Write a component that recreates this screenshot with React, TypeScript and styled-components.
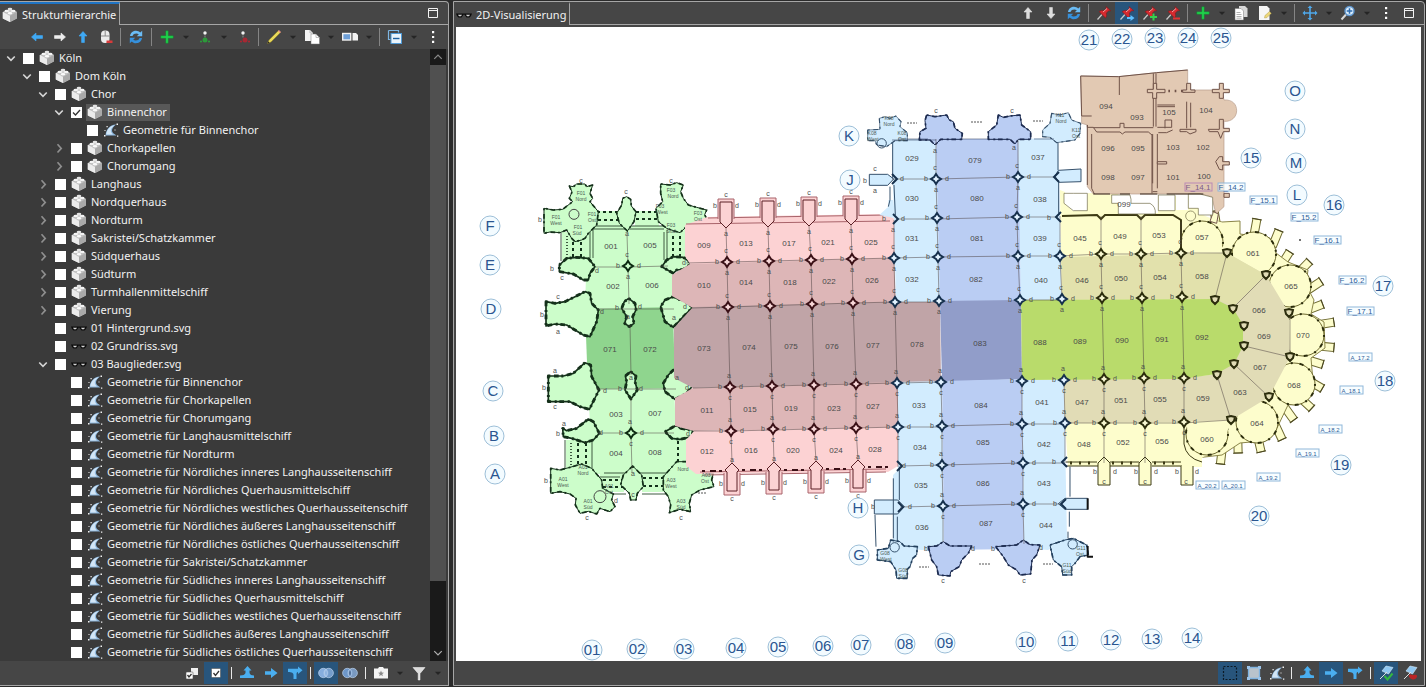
import React from "react";
import styled, { createGlobalStyle } from "styled-components";

const GlobalStyle = createGlobalStyle`
  * { box-sizing: border-box; }
  body { margin: 0; background: #1c1c1c; }
  button { font: inherit; color: inherit; border: 0; background: none; padding: 0; }
`;

/* ---------- layout ---------- */

const Shell = styled.main`
  display: flex;
  gap: 4px;
  height: 100vh;
  min-height: 300px;
  padding: 1px 1px 1px 0;
  background: #2b2b2b;
  color: #f2f2f2;
  font-family: "Noto Sans", "Open Sans", sans-serif;
  font-size: 11px;
  line-height: 18px;
`;

const Panel = styled.section<{ $grow?: boolean }>`
  display: flex;
  flex-direction: column;
  flex: ${(p) => (p.$grow ? "1 1 0" : "0 0 449px")};
  min-width: 0;
  background: #464646;
  border: 1px solid #a6a6a6;
  border-left-width: ${(p) => (p.$grow ? "1px" : "0")};
  border-radius: 0 4px 0 0;
`;

const Header = styled.header`
  display: flex;
  flex: 0 0 23px;
  border-bottom: 1px solid #a6a6a6;
`;

const Tab = styled.button<{ $active?: boolean }>`
  display: flex;
  align-items: center;
  gap: 4px;
  padding: 0 3px 0 2px;
  margin-bottom: -1px;
  background: #464646;
  border-right: 1px solid #a6a6a6;
  border-top: 2px solid ${(p) => (p.$active ? "#1f74c4" : "#464646")};
  white-space: nowrap;
`;

const HeaderTools = styled.div`
  display: flex;
  align-items: center;
  margin-left: auto;
  padding-right: 3px;
`;

const ToolRow = styled.div`
  display: flex;
  flex: 0 0 24px;
  align-items: center;
  justify-content: flex-end;
  padding-right: 3px;
`;

const Tool = styled.button<{ $width?: number; $on?: boolean }>`
  display: flex;
  align-items: center;
  justify-content: center;
  flex: 0 0 ${(p) => p.$width ?? 24}px;
  height: 22px;
  background: ${(p) => (p.$on ? "#28557c" : "transparent")};
`;

const Sep = styled.span<{ $tall?: boolean }>`
  flex: 0 0 1px;
  height: ${(p) => (p.$tall ? 18 : 12)}px;
  margin: 0 3px;
  background: ${(p) => (p.$tall ? "#858585" : "#e8e8e8")};
`;

const TreeArea = styled.div`
  display: flex;
  flex: 1 1 0;
  min-height: 0;
  padding-right: 2px;
  background: #3a3a3a;
`;

const Tree = styled.ul`
  flex: 1;
  min-width: 0;
  margin: 0;
  padding: 0;
  list-style: none;
  overflow: hidden;
`;

const Row = styled.li<{ $depth: number }>`
  display: flex;
  align-items: center;
  height: 18px;
  padding-left: ${(p) => 5 + p.$depth * 16}px;
`;

const Twisty = styled.button`
  display: flex;
  align-items: center;
  flex: 0 0 18px;
  height: 18px;
`;

const Check = styled.input`
  appearance: none;
  width: 11px;
  height: 11px;
  margin: 0;
  background: #fff;
`;

const CheckWrap = styled.span`
  display: grid;
  flex: 0 0 11px;
  margin-right: 4px;
  > * { grid-area: 1 / 1; }
  svg { pointer-events: none; }
`;

const RowLabel = styled.label<{ $selected?: boolean }>`
  display: flex;
  align-items: center;
  gap: 4px;
  height: 17px;
  padding: 0 3px 0 1px;
  background: ${(p) => (p.$selected ? "#585858" : "transparent")};
  white-space: nowrap;
`;

const Scrollbar = styled.div`
  display: flex;
  flex-direction: column;
  flex: 0 0 16px;
  background: #1a1a1a;
`;

const ScrollButton = styled.button`
  display: flex;
  align-items: center;
  justify-content: center;
  flex: 0 0 16px;
`;

const Track = styled.div`
  flex: 1;
  min-height: 0;
`;

const Thumb = styled.div`
  height: 89%;
  background: #505050;
`;

const Canvas = styled.div`
  flex: 1 1 0;
  min-height: 0;
  margin: 2px 3px 0 2px;
  background: #fff;
  svg { display: block; width: 100%; height: 100%; }
`;

/* ---------- icons ---------- */

const Svg = ({ children, size = 16 }: { children: React.ReactNode; size?: number }) => (
  <svg width={size} height={size} viewBox="0 0 16 16" fill="none" aria-hidden="true">
    {children}
  </svg>
);

const ARROW = "M2.5 8 7 4v2.6h6.5v2.8H7V12z";
const Arrow = ({ turn = 0, color = "#3fa9f5" }: { turn?: number; color?: string }) => (
  <Svg>
    <path d={ARROW} fill={color} stroke={color} strokeWidth=".6" transform={`rotate(${turn} 8 8)`} />
  </Svg>
);

const Brick = () => (
  <Svg>
    <path d="M.8 5 7.500 2l7.300 2.800v6.700L8 15 .8 11.500z" fill="#cfcfcf" />
    <path d="M.8 5 8 8.500V15L.8 11.500z" fill="#ececec" />
    <path d="M14.800 4.800 8 8.500V15l6.800-3.500z" fill="#a9a9a9" />
    <path d="M2.500 4v1.800c1 1 3.500 1 4.500 0V4zM9 4v1.800c1 1 3.500 1 4.500 0V4zM5.700 6.200v1.600c1 1 3.600 1 4.600 0V6.200z" fill="#b9b9b9" />
    <ellipse cx="4.800" cy="4" rx="2.300" ry="1.300" fill="#f4f4f4" />
    <ellipse cx="11.200" cy="4" rx="2.300" ry="1.300" fill="#f4f4f4" />
    <ellipse cx="8" cy="2" rx="2.300" ry="1.200" fill="#e4e4e4" />
    <ellipse cx="8" cy="6.200" rx="2.300" ry="1.300" fill="#fafafa" />
  </Svg>
);

const Shape = () => (
  <Svg>
    <path d="M2.500 13.500C3 7.500 6.500 3 13 2.500 10.500 4.500 9 6.500 9 8.500c0 2 2 3.500 4.500 5z" fill="#8fb9df" />
    <path d="M3.200 12.500C4 7.500 7 4 11.500 3.200 9 5 7.800 7 7.800 8.500c0 1.500.7 2.500 2 4z" fill="#d3e6f6" />
    <path d="M1 13h1.500v1.500H1zM13.500 1.500H15V3h-1.500zM14 13.500h1.300v1.300H14zM3.500 4h1.200v1.200H3.500zM1.500 8h1v1h-1zM11.500 7.500h1v1h-1z" fill="#f4f4f4" />
  </Svg>
);

const Glasses = () => (
  <Svg>
    <path d="M0 6.500h7v2L5.500 10.500h-3L1 9zM9 6.500h7L15 9l-1.500 1.500h-3L9 8.500zM6 6.500h4v1.200H6z" fill="#0b0b0b" />
    <path d="M2 7.700h4L5 9.300H3zM10 7.700h4l-1 1.600h-2z" fill="#d5d5d5" />
  </Svg>
);

const Refresh = () => (
  <Svg>
    <path d="M2 7C2.500 3.500 5.300 1.800 8 1.800c1.700 0 3.200.7 4.200 1.800L14.200 1.800V7.200H8.800L10.800 5.300C9 3.900 5.300 4.200 4.500 7z" fill="#6bbcf5" />
    <path d="M14 9c-.5 3.500-3.300 5.200-6 5.200-1.700 0-3.200-.7-4.200-1.800L1.800 14.200V8.800H7.200L5.200 10.700C7 12.100 10.700 11.800 11.500 9z" fill="#3590dc" />
  </Svg>
);

const Plus = () => (
  <Svg>
    <path d="M6.800 1.800h2.400v5h5v2.400h-5v5H6.800v-5h-5V6.800h5z" fill="#1fd14b" stroke="#0b8a2a" strokeWidth=".4" />
  </Svg>
);

const Mouse = () => (
  <Svg>
    <rect x="3" y="1.500" width="8.500" height="12.500" rx="4" fill="#ececec" />
    <path d="M7.200 1.500V7M3 7h8.500" stroke="#8b8b8b" />
    <rect x="8.500" y="11.500" width="6" height="2.500" fill="#d83a3a" />
  </Svg>
);

const Node = ({ remove }: { remove?: boolean }) => {
  const color = remove ? "#a82833" : "#2c9a3a";
  const cx = remove ? 10 : 8;
  return (
    <Svg>
      <circle cx="8" cy="4" r="1.700" fill="#f2f2f2" />
      <path d="M8 6.500v2" stroke="#8a8a8a" />
      <circle cx={cx} cy="11" r="2.500" fill={color} />
      <circle cx={cx - 4} cy="12.500" r="1.100" fill={color} />
      <circle cx={cx + 4} cy="12.500" r="1.100" fill={color} />
    </Svg>
  );
};

const Pencil = () => (
  <Svg>
    <path d="M1.500 14.500 3 11 12.500 1.500l2 2L5 13z" fill="#e9d95a" stroke="#8e7d1c" strokeWidth=".5" />
    <path d="m12 2 1-1 2 2-1 1z" fill="#e98a8a" />
    <path d="m1.500 14.500.8-2 1.200 1.200z" fill="#222" />
  </Svg>
);

const Copy = () => (
  <Svg>
    <path d="M1 1h5l3 3v8H1z" fill="#f4f4f4" />
    <path d="M7 5h5l3.500 3.500V15H7z" fill="#fff" stroke="#777" strokeWidth=".5" />
    <path d="M12 5v3.500h3.500M6 1v3h3" stroke="#999" strokeWidth=".6" />
  </Svg>
);

const Pages = () => (
  <Svg>
    <path d="M6 1h6l2.500 2.500V12H6z" fill="#d8d8d8" />
    <path d="M2 3.500h6L10.500 6v9H2z" fill="#fff" stroke="#777" strokeWidth=".5" />
    <path d="M3.500 7.500h4M3.500 9.500h5M3.500 11.500h5M3.500 13.200h5" stroke="#8f8f8f" strokeWidth=".7" />
  </Svg>
);

const Doc = () => (
  <Svg>
    <path d="M2 1h8l2.500 2.500V15H2z" fill="#f6f6f6" />
    <path d="m7.500 13 .5-2.500 4.500-4 1.800 1.800-4.300 4.300z" fill="#ecd77a" stroke="#a68f31" strokeWidth=".4" />
  </Svg>
);

const Swap = () => (
  <Svg>
    <rect x=".7" y="4.500" width="8" height="6.500" fill="#6fa0d8" stroke="#f2f2f2" strokeWidth="1.400" />
    <path d="M10.500 4H14l2 2v5.500h-5.500z" fill="#f4f4f4" />
  </Svg>
);

const Collapse = () => (
  <Svg>
    <path d="M1.500 1.500h10v2M1.500 1.500v9h2" stroke="#7db5e2" strokeWidth="1.200" />
    <rect x="4" y="4.500" width="10.500" height="10" fill="#e9f3fb" stroke="#4f9ad6" />
    <path d="M6 9.500h6.500" stroke="#1c5f9e" strokeWidth="1.400" />
  </Svg>
);

const Dots = () => (
  <Svg>
    <path d="M7 2h2.200v2.200H7zM7 6.900h2.200v2.200H7zM7 11.800h2.200V14H7z" fill="#fff" />
  </Svg>
);

const Maximize = () => (
  <Svg>
    <path d="M3.500 3.500h9v9h-9zM3.500 5.500h9" stroke="#f2f2f2" />
  </Svg>
);

const Caret = () => (
  <Svg size={10}>
    <path d="M3 6h10L8 11z" fill="#252525" />
  </Svg>
);

const Pin = ({ badge }: { badge?: "go" | "add" | "remove" }) => (
  <Svg>
    <path d="M1.500 14.500 6 9.500" stroke="#c9c9c9" strokeWidth="1.200" />
    <path d="m3 6.500 2.500-1 2.500.3L10.300 3.500 10 1.500l4.800 4.300-2-.1L10.300 8l.3 2.800-1 2.200z" fill="#d62a2f" stroke="#851316" strokeWidth=".5" />
    <path d="m7 7 4-3.500" stroke="#f7a0a0" />
    {badge === "go" && <path d="M8 12h3.500v-2l4 3-4 3v-2H8z" fill="#5ec0ff" />}
    {badge === "add" && <path d="M10.500 8.500h2v2.500H15v2h-2.500v2.500h-2V13H8v-2h2.500z" fill="#35d04e" />}
    {badge === "remove" && <path d="M8 12.500h7v2H8z" fill="#e13535" />}
  </Svg>
);

const Move = () => (
  <Svg>
    <path d="M8 .5 10.500 3H8.800v4.200H13V5.500L15.500 8 13 10.500V8.800H8.800V13h1.700L8 15.500 5.500 13h1.700V8.800H3v1.700L.5 8 3 5.500v1.700h4.200V3H5.500z" fill="#4fa8ea" />
  </Svg>
);

const Zoom = () => (
  <Svg>
    <path d="m1.500 14.500 4.500-5" stroke="#d8d8d8" strokeWidth="2" />
    <circle cx="9.500" cy="6" r="4.500" fill="#d9ecfb" stroke="#5d94cc" strokeWidth="1.400" />
    <path d="M9.500 3.200v5.600M6.700 6h5.600" stroke="#2f6cb0" strokeWidth="1.500" />
  </Svg>
);

const CheckBoxes = ({ pair }: { pair?: boolean }) => (
  <Svg>
    {pair && <rect x="7" y="3" width="7" height="7" fill="#efefef" />}
    <rect x={pair ? 2 : 3.500} y={pair ? 7 : 3.500} width={pair ? 7 : 9} height={pair ? 7 : 9} rx=".8" fill="#fff" stroke="#555" strokeWidth=".6" />
    <path d={pair ? "m3.500 10 1.500 2L7.500 9" : "m5.500 8 2 2.500L11 6"} stroke="#333" strokeWidth="1.300" />
  </Svg>
);

const Flow = ({ kind }: { kind: "up" | "right" | "down" }) => (
  <Svg>
    {kind === "up" && <path d="M1 13v-2.500c3 0 5-.8 5.500-2.500V5.500h-2L8.500 1l4 4.500h-2V8c.5 1.700 2 2.500 4.500 2.500V13z" fill="#4aaeef" />}
    {kind === "right" && <path d="M2 6.300h6V3l6.500 5L8 13V9.700H2z" fill="#4aaeef" />}
    {kind === "down" && <path d="M1 3.800h10V1.500l4.500 3.700L11 9V7C9.800 7.200 9.500 8 9.500 9.500V14h-3V10C6.500 8 5 7 1 7z" fill="#4aaeef" />}
  </Svg>
);

const Venn = ({ union }: { union?: boolean }) => (
  <Svg>
    <circle cx="5.300" cy="8" r="4.700" fill={union ? "#86aede" : "#6e97c9"} stroke="#bcd3ee" strokeWidth=".7" />
    <circle cx="10.700" cy="8" r="4.700" fill="#86aede" fillOpacity=".8" stroke="#bcd3ee" strokeWidth=".7" />
    <path d="M8 4.200c1.800 2 1.800 5.600 0 7.600-1.800-2-1.800-5.600 0-7.600z" fill={union ? "#86aede" : "#3e5f8c"} stroke="#bcd3ee" strokeWidth=".7" />
  </Svg>
);

const Camera = () => (
  <Svg>
    <path d="M1 3.500h4L6 2h4l1 1.500h4v10H1z" fill="#f4f4f4" />
    <path d="m8 5.500.8 2 2.200.2-1.700 1.400.5 2.100L8 10l-1.800 1.200.5-2.100L5 7.700l2.200-.2z" fill="#8a8a8a" />
  </Svg>
);

const Funnel = () => (
  <Svg>
    <path d="M2 2.500h12L9 8.500V15H7.200V8.500z" fill="#dcdcdc" stroke="#fff" strokeWidth=".5" />
  </Svg>
);

const Marquee = () => (
  <Svg>
    <path d="M1.500 1.500h13v13h-13z" stroke="#0c1a26" strokeDasharray="2 1.500" strokeWidth="1.200" />
  </Svg>
);

const Frame = () => (
  <Svg>
    <path d="M2.500 2.500h11v11h-11z" fill="#b9c3cc" stroke="#7fb3e0" strokeWidth="1.300" />
    <path d="M1 1h3v3H1zM12 1h3v3h-3zM1 12h3v3H1zM12 12h3v3h-3z" fill="#9cc4ea" />
  </Svg>
);

const Layer = ({ off }: { off?: boolean }) => (
  <Svg>
    <path d="m8 1 7 1.500-4.500 6.500L4 6z" fill="#8fc7f1" stroke="#d9ecfa" strokeWidth=".6" />
    <path d="M2 14 9 7" stroke="#ddd" />
    {off ? (
      <path d="M7 10c2-1.500 3 .5 4.500 0s3-.5 3.500.5-1 4-3.500 4-5.500-2.500-4.500-4.500z" fill="#b92525" />
    ) : (
      <path d="m6.500 11 3 3.500 5-6" stroke="#35b83f" strokeWidth="2" />
    )}
  </Svg>
);

const Chevron = ({ open }: { open: boolean }) => (
  <Svg size={12}>
    <path d={open ? "m3 6 5 5 5-5" : "m6 3 5 5.500L6 14"} stroke={open ? "#d6d6d6" : "#8f8f8f"} strokeWidth="2.200" />
  </Svg>
);

/* ---------- tool bars ---------- */

type Item = { label: string; icon: React.ReactNode; width?: number; on?: boolean } | "sep" | "menu";

const Tools = ({ items, tall }: { items: Item[]; tall?: boolean }) => (
  <>
    {items.map((it, i) =>
      it === "sep" ? (
        <Sep key={i} $tall={tall} />
      ) : it === "menu" ? (
        <Tool key={i} $width={14} aria-label="Menü">
          <Caret />
        </Tool>
      ) : (
        <Tool key={i} $width={it.width} $on={it.on} aria-label={it.label}>
          {it.icon}
        </Tool>
      ),
    )}
  </>
);

const treeTools: Item[] = [
  { label: "Zurück", icon: <Arrow />, width: 23 },
  { label: "Vor", icon: <Arrow turn={180} color="#ededed" />, width: 23 },
  { label: "Nach oben", icon: <Arrow turn={90} />, width: 23 },
  { label: "Auswahl entfernen", icon: <Mouse />, width: 23 },
  "sep",
  { label: "Aktualisieren", icon: <Refresh /> },
  "sep",
  { label: "Neu", icon: <Plus /> },
  "menu",
  { label: "Knoten hinzufügen", icon: <Node /> },
  "menu",
  { label: "Knoten entfernen", icon: <Node remove /> },
  "sep",
  { label: "Bearbeiten", icon: <Pencil /> },
  "menu",
  { label: "Kopieren", icon: <Copy /> },
  "menu",
  { label: "Umbenennen", icon: <Swap /> },
  "menu",
  "sep",
  { label: "Alle einklappen", icon: <Collapse /> },
  "menu",
  { label: "Mehr", icon: <Dots /> },
];

const treeFooter: Item[] = [
  { label: "Mehrfachauswahl", icon: <CheckBoxes pair /> },
  { label: "Auswahl", icon: <CheckBoxes />, on: true },
  "sep",
  { label: "Übergeordnete", icon: <Flow kind="up" /> },
  { label: "Gleiche Ebene", icon: <Flow kind="right" /> },
  { label: "Untergeordnete", icon: <Flow kind="down" />, on: true },
  "sep",
  { label: "Vereinigung", icon: <Venn union />, on: true },
  { label: "Schnittmenge", icon: <Venn /> },
  "sep",
  { label: "Ansicht", icon: <Camera /> },
  "menu",
  { label: "Filter", icon: <Funnel /> },
  "menu",
];

const viewTools: Item[] = [
  { label: "Hoch", icon: <Arrow turn={90} color="#dedede" />, width: 23 },
  { label: "Runter", icon: <Arrow turn={270} color="#dedede" />, width: 23 },
  { label: "Aktualisieren", icon: <Refresh />, width: 23 },
  "sep",
  { label: "Anheften", icon: <Pin />, width: 23 },
  { label: "Folgen", icon: <Pin badge="go" />, width: 23, on: true },
  { label: "Pin hinzufügen", icon: <Pin badge="add" />, width: 23 },
  { label: "Pin entfernen", icon: <Pin badge="remove" />, width: 23 },
  "sep",
  { label: "Neu", icon: <Plus /> },
  "menu",
  { label: "Kopieren", icon: <Pages /> },
  { label: "Notiz", icon: <Doc /> },
  "menu",
  "sep",
  { label: "Verschieben", icon: <Move /> },
  "menu",
  { label: "Zoom", icon: <Zoom /> },
  "menu",
  { label: "Mehr", icon: <Dots />, width: 23 },
  { label: "Maximieren", icon: <Maximize /> },
];

const viewFooter: Item[] = [
  { label: "Rechteckauswahl", icon: <Marquee />, on: true },
  { label: "Rahmen", icon: <Frame />, width: 23 },
  { label: "Polygon", icon: <Shape />, width: 23 },
  "sep",
  { label: "Übergeordnete", icon: <Flow kind="up" /> },
  { label: "Gleiche Ebene", icon: <Flow kind="right" />, on: true },
  { label: "Untergeordnete", icon: <Flow kind="down" /> },
  "sep",
  { label: "Ebene zeigen", icon: <Layer />, on: true },
  { label: "Ebene verbergen", icon: <Layer off />, width: 23 },
];

/* ---------- tree data ---------- */

type NodeRow = { t: string; d: number; k: "brick" | "shape" | "svg"; open?: boolean; sel?: boolean };
const closed = (t: string, d: number): NodeRow => ({ t, d, k: "brick", open: false });
const geo = (t: string, d = 3): NodeRow => ({ t: "Geometrie für " + t, d, k: "shape" });

const rows: NodeRow[] = [
  { t: "Köln", d: 0, k: "brick", open: true },
  { t: "Dom Köln", d: 1, k: "brick", open: true },
  { t: "Chor", d: 2, k: "brick", open: true },
  { t: "Binnenchor", d: 3, k: "brick", open: true, sel: true },
  geo("Binnenchor", 4),
  closed("Chorkapellen", 3),
  closed("Chorumgang", 3),
  closed("Langhaus", 2),
  closed("Nordquerhaus", 2),
  closed("Nordturm", 2),
  closed("Sakristei/Schatzkammer", 2),
  closed("Südquerhaus", 2),
  closed("Südturm", 2),
  closed("Turmhallenmittelschiff", 2),
  closed("Vierung", 2),
  { t: "01 Hintergrund.svg", d: 2, k: "svg" },
  { t: "02 Grundriss.svg", d: 2, k: "svg" },
  { t: "03 Bauglieder.svg", d: 2, k: "svg", open: true },
  ...[
    "Binnenchor",
    "Chorkapellen",
    "Chorumgang",
    "Langhausmittelschiff",
    "Nordturm",
    "Nördliches inneres Langhausseitenschiff",
    "Nördliches Querhausmittelschiff",
    "Nördliches westliches Querhausseitenschiff",
    "Nördliches äußeres Langhausseitenschiff",
    "Nördliches östliches Querhausseitenschiff",
    "Sakristei/Schatzkammer",
    "Südliches inneres Langhausseitenschiff",
    "Südliches Querhausmittelschiff",
    "Südliches westliches Querhausseitenschiff",
    "Südliches äußeres Langhausseitenschiff",
    "Südliches östliches Querhausseitenschiff",
  ].map((t) => geo(t)),
];

/* ---------- floor plan ---------- */

const C = {
  green: "#ccfdca",
  greenDark: "#8fd58e",
  pink: "#fcd2d3",
  rose: "#ddb6b7",
  mauve: "#c0a4a7",
  sky: "#d2ecfe",
  blue: "#bacdf3",
  crossing: "#919dc9",
  yellow: "#fdfdcc",
  khaki: "#e2e1ac",
  beige: "#e1dcb6",
  lime: "#b9db6b",
  brown: "#e2c9b3",
};

/* Parts are traced on a grid three times finer than the plan. */
const Traced = ({ x, y, children }: { x: number; y: number; children: React.ReactNode }) => (
  <g transform={`translate(${x} ${y}) scale(0.33333)`} strokeLinejoin="round">
    {children}
  </g>
);

const Bay = ({ p, f }: { p: string; f: string }) => <polygon points={p} fill={f} />;
const Pier = ({ p, f = C.green, s = "#14301a", w = 5 }: { p: string; f?: string; s?: string; w?: number }) => (
  <>
    <polygon points={p} fill={f} stroke={s} strokeWidth={w} />
    <polygon points={p} fill="none" stroke={s} strokeWidth={w * 1.7} strokeDasharray="6 11 14 8" />
  </>
);

type P3 = [number, number, string];
const piers: P3[] = [
  [727, 262, "r"], [769, 261, "r"], [811, 260, "r"], [852, 259, "r"],
  [728, 307, "r"], [770, 306, "r"], [812, 304, "r"], [853, 303, "r"],
  [730, 387, "r"], [772, 386, "r"], [814, 385, "r"], [856, 384, "r"],
  [731, 431, "r"], [773, 429, "r"], [814, 429, "r"], [856, 428, "r"],
  [894, 258, "b"], [895, 302, "b"], [897, 383, "b"], [898, 427, "b"],
  [936, 179, "b"], [937, 218, "b"], [938, 257, "b"], [939, 301, "b"],
  [1018, 177, "b"], [1017, 217, "b"], [1018, 256, "b"], [1020, 300, "b"],
  [941, 382, "b"], [942, 426, "b"], [942, 465, "b"], [943, 506, "b"],
  [1022, 381, "b"], [1022, 424, "b"], [1023, 463, "b"], [1023, 504, "b"],
  [1060, 256, "b"], [1062, 299, "b"], [1064, 380, "b"], [1065, 423, "b"],
  [1101, 254, "y"], [1141, 254, "y"], [1181, 253, "y"],
  [1102, 298, "y"], [1142, 298, "y"], [1182, 297, "y"],
  [1104, 379, "y"], [1144, 378, "y"], [1184, 378, "y"],
  [1104, 423, "y"], [1145, 423, "y"], [1184, 422, "y"],
  [628, 266, "g"], [631, 433, "g"],
];
const pierInk: Record<string, string> = { r: "#3a1016", b: "#16304d", y: "#2b2c0c", g: "#0c2a12" };
const pierFill: Record<string, string> = { r: "#f7d6d7", b: "#e2f2ff", y: "#f6f6d0", g: "#ccfdca" };

const apse: [number, number][] = [
  [1215, 300], [1233, 309], [1244, 326], [1244, 346], [1234, 364], [1217, 375],
  [1227, 253], [1266, 275], [1289, 313], [1290, 357], [1269, 397], [1231, 420],
];
const chapels: [number, number, number][] = [
  [1202, 242, 21], [1254, 254, 22], [1290, 286, 21], [1303, 335, 21], [1294, 384, 21], [1257, 422, 21], [1207, 434, 21],
];
const spurs: [number, number][] = [
  [1215, 216], [1256, 224], [1277, 235], [1287, 256], [1306, 265], [1317, 284], [1318, 306], [1329, 323],
  [1329, 347], [1318, 363], [1318, 386], [1308, 405], [1291, 416], [1280, 435], [1260, 447], [1238, 448], [1221, 459],
];

const rooms: [string, number, number][] = [
  ["001", 611, 246], ["005", 650, 245], ["002", 613, 286], ["006", 652, 285], ["071", 610, 349], ["072", 650, 349],
  ["003", 616, 414], ["007", 655, 413], ["004", 616, 453], ["008", 655, 452],
  ["009", 704, 245], ["013", 746, 243], ["017", 789, 243], ["021", 828, 242], ["025", 871, 242],
  ["010", 704, 285], ["014", 746, 282], ["018", 790, 282], ["022", 829, 281], ["026", 872, 280],
  ["073", 704, 348], ["074", 749, 347], ["075", 791, 346], ["076", 832, 346], ["077", 873, 345], ["078", 917, 344],
  ["011", 707, 410], ["015", 750, 409], ["019", 791, 408], ["023", 834, 408], ["027", 873, 406],
  ["012", 707, 451], ["016", 751, 450], ["020", 793, 450], ["024", 836, 450], ["028", 875, 449],
  ["029", 912, 158], ["030", 912, 198], ["031", 912, 238], ["032", 912, 279],
  ["079", 975, 160], ["080", 977, 198], ["081", 977, 238], ["082", 976, 279], ["083", 980, 343],
  ["037", 1038, 157], ["038", 1040, 199], ["039", 1040, 238], ["040", 1041, 280],
  ["033", 919, 405], ["034", 920, 447], ["035", 921, 485], ["036", 922, 527],
  ["084", 981, 405], ["085", 983, 442], ["086", 983, 483], ["087", 986, 523],
  ["041", 1042, 402], ["042", 1044, 444], ["043", 1044, 483], ["044", 1046, 525],
  ["045", 1080, 238], ["049", 1120, 236], ["053", 1159, 235], ["057", 1202, 237], ["061", 1253, 253], ["065", 1291, 286],
  ["046", 1082, 280], ["050", 1121, 278], ["054", 1160, 277], ["058", 1202, 276], ["066", 1259, 310],
  ["088", 1040, 342], ["089", 1080, 341], ["090", 1122, 340], ["091", 1162, 339], ["092", 1202, 337],
  ["069", 1264, 336], ["070", 1303, 335], ["067", 1260, 367], ["068", 1294, 385], ["063", 1240, 392], ["064", 1257, 423],
  ["047", 1082, 402], ["051", 1121, 400], ["055", 1160, 399], ["059", 1203, 398],
  ["048", 1084, 444], ["052", 1123, 442], ["056", 1162, 441], ["060", 1207, 439],
  ["094", 1106, 106], ["093", 1137, 117], ["105", 1169, 112], ["104", 1206, 110],
  ["096", 1108, 148], ["095", 1138, 148], ["103", 1173, 147], ["102", 1203, 147],
  ["098", 1108, 177], ["097", 1138, 177], ["101", 1173, 177], ["100", 1204, 176], ["099", 1124, 204],
];

const circles: [string, number, number][] = [
  ["21", 1089, 40], ["22", 1122, 39], ["23", 1155, 38], ["24", 1188, 38], ["25", 1221, 38],
  ["O", 1295, 91], ["N", 1295, 129], ["M", 1296, 163], ["L", 1297, 195], ["15", 1251, 158], ["16", 1334, 205],
  ["17", 1383, 286], ["18", 1385, 381], ["19", 1341, 465], ["20", 1259, 516],
  ["K", 849, 136], ["J", 850, 180], ["H", 858, 508], ["G", 859, 555],
  ["F", 490, 226], ["E", 490, 265], ["D", 491, 309], ["C", 493, 391], ["B", 494, 436], ["A", 495, 474],
  ["01", 592, 650], ["02", 637, 649], ["03", 684, 649], ["04", 736, 648], ["05", 778, 647], ["06", 823, 646], ["07", 861, 645],
  ["08", 905, 644], ["09", 945, 643], ["10", 1026, 642], ["11", 1068, 641], ["12", 1111, 640], ["13", 1152, 639], ["14", 1192, 638],
];

const tags: [string, number, number][] = [
  ["F_14.1", 1198, 187], ["F_14.2", 1231, 187], ["F_15.1", 1263, 200], ["F_15.2", 1304, 217], ["F_16.1", 1327, 240],
  ["F_16.2", 1352, 280], ["F_17.1", 1360, 311], ["A_17.2", 1360, 357], ["A_18.1", 1351, 390], ["A_18.2", 1330, 429],
  ["A_19.1", 1307, 453], ["A_19.2", 1268, 477], ["A_20.1", 1233, 485], ["A_20.2", 1207, 485],
];

const marks: [string, number, number][] = [
  ["F01", 581, 193], ["Nord", 581, 199], ["F01", 556, 217], ["West", 556, 223], ["F01", 578, 227], ["Süd", 577, 233], ["F01", 592, 214], ["Ost", 592, 220],
  ["F03", 671, 190], ["Nord", 673, 196], ["F03", 660, 206], ["West", 662, 212], ["F03", 698, 213], ["Ost", 698, 219], ["F03", 671, 225], ["Süd", 671, 231],
  ["A01", 583, 467], ["Nord", 583, 473], ["A01", 563, 479], ["West", 563, 485], ["A01", 588, 501], ["Süd", 588, 507], ["A01", 609, 486], ["Ost", 609, 492],
  ["Nord", 683, 469], ["A03", 671, 480], ["West", 671, 486], ["A03", 706, 475], ["Ost", 705, 481], ["A03", 681, 501], ["Süd", 681, 507],
  ["K08", 889, 118], ["Nord", 889, 124], ["K08", 872, 133], ["West", 873, 139], ["K08", 902, 133], ["Ost", 902, 139],
  ["K11", 1060, 115], ["Nord", 1061, 121], ["K11", 1076, 130], ["Ost", 1076, 136],
  ["G08", 885, 553], ["West", 886, 559], ["G08", 903, 570], ["Süd", 903, 576], ["G11", 1081, 548], ["Ost", 1080, 554], ["G11", 1067, 565], ["Süd", 1067, 571],
];

const loose: [string, number, number][] = [
  ["c", 581, 181], ["c", 626, 192], ["c", 671, 181], ["b", 540, 220], ["b", 552, 269], ["c", 562, 278], ["b", 542, 315], ["c", 558, 297], ["a", 558, 332],
  ["b", 544, 388], ["a", 555, 371], ["c", 555, 407], ["b", 558, 434], ["a", 564, 424], ["b", 546, 481], ["c", 587, 518], ["c", 681, 518], ["d", 616, 501],
  ["d", 597, 271], ["a", 627, 234], ["d", 602, 312], ["d", 605, 391], ["d", 601, 433], ["b", 617, 308], ["d", 640, 307], ["a", 628, 317], ["b", 620, 389],
  ["d", 641, 389], ["a", 631, 378], ["d", 684, 263], ["d", 685, 307], ["a", 674, 318], ["a", 677, 378], ["d", 687, 388], ["d", 688, 434], ["a", 633, 474], ["c", 633, 495],
  ["c", 875, 169], ["b", 865, 181], ["a", 875, 191], ["c", 936, 111], ["c", 1012, 111], ["b", 873, 507], ["a", 935, 151], ["a", 1014, 148],
  ["d", 902, 179], ["b", 884, 219], ["d", 903, 219], ["d", 904, 466], ["d", 910, 507], ["b", 1055, 504], ["b", 1054, 462], ["b", 1049, 218],
  ["a", 893, 230], ["b", 926, 549], ["d", 973, 549], ["b", 993, 549], ["d", 1041, 548], ["c", 943, 581], ["c", 1024, 581],
];

const topPegs = [726, 768, 809, 851];
const footPegs = [732, 774, 816, 858];
const roseTops = [262, 261, 260, 259];

const FloorPlan = () => (
  <svg viewBox="456 27 965 634" preserveAspectRatio="xMidYMin meet" role="img" aria-label="Grundriss Dom Köln" fontFamily="Liberation Sans, Arial, sans-serif">
    {/* west towers */}
    <Bay f={C.green} p="590,226 686,226 686,258 672,270 674,308 585,309 586,276 594,268 590,262" />
    <Bay f={C.green} p="588,388 674,388 676,430 688,436 688,474 592,474 592,440 590,424" />
    <Bay f={C.greenDark} p="585,309 673,307 675,388 588,389" />
    <g fill="none" stroke="#3e5a40" strokeWidth="1">
      <path fill={C.green} d="M562 232h30v28h-30zM566 440h26v32h-26zM664 228h20v34h-20zM668 436h20v30h-20zM596 211h24v16h-24zM635 211h24v16h-24zM600 474h24v18h-24zM642 474h24v18h-24z" stroke="none" />
      <path d="M561 233v28M590 232v26M593 230v28M592 226h74M592 229h72M565 440v32M592 440v32M604 473h62M604 494h22M642 494h24M596 477h24M664 232v28M667 230v30M686 228v30" />
      <path d="M573 236v24M581 236v24M673 236v26M680 236v26M578 443v26M586 443v26M678 441v24M597 212h22M598 220h22M636 212h22M636 219h22M603 480h20M603 487h20M643 478h20M643 486h20" stroke="#12301a" strokeWidth="2" strokeDasharray="3 3" />
      <path d="M567 236v24M571 443v26" strokeDasharray="1 2" strokeWidth="2" />
    </g>
    <Traced x={530} y={170}>
      <Pier w={3} p="42,115 42,190 60,186 90,188 110,180 125,205 135,215 155,210 165,205 175,190 200,165 205,125 180,95 188,85 180,70 188,45 170,50 165,42 140,42 130,50 118,48 126,66 118,85 128,95 98,118 70,120" />
      <Pier w={3} p="278,85 290,80 302,88 304,108 318,125 312,155 292,183 268,160 260,130 275,105" />
      <Pier w={3} p="392,42 420,45 440,38 460,45 452,65 460,85 475,105 500,112 530,120 524,134 532,150 500,160 475,165 450,188 430,182 410,175 385,155 378,115 398,95 392,70" />
      <Pier p="395,290 410,270 430,260 460,262 485,280 460,298 440,300 430,310" />
      <Pier p="88,285 110,265 140,262 175,265 195,290 180,310 175,330 160,330 130,312 88,305" />
      <Pier p="48,395 75,400 105,395 165,365 180,370 185,400 205,420 200,455 180,500 160,495 110,465 75,462 48,468" />
      <Pier p="296,385 315,400 318,420 308,440 312,460 298,470 284,460 290,440 275,415 283,395" />
      <Pier p="430,380 445,388 460,390 488,412 460,440 430,472 405,455 392,410 405,390" />
      <circle cx="132" cy="133" r="15" fill="none" stroke="#444" strokeWidth="3" />
    </Traced>
    <Traced x={530} y={340}>
      <Pier p="55,108 100,108 130,100 165,68 182,75 185,110 207,150 192,180 178,208 150,200 120,185 55,185" />
      <Pier p="302,95 318,108 315,125 322,150 303,177 285,150 290,125 286,108" />
      <Pier p="432,88 460,95 490,135 470,160 435,178 405,155 400,130 415,105" />
      <Pier p="98,265 110,272 140,265 175,237 190,245 208,280 190,300 165,308 125,295 100,290" />
      <Pier p="405,275 440,255 450,265 490,270 485,290 450,298 425,295" />
      <Pier w={3} p="62,385 62,460 90,455 120,462 138,475 136,495 150,520 175,514 200,522 210,505 240,515 255,500 245,480 250,462 218,445 215,420 185,385 155,372 120,382 90,390" />
      <Pier w={3} p="308,378 335,405 340,440 322,460 318,480 302,480 298,460 272,435 280,405" />
      <Pier w={3} p="440,365 480,365 505,395 550,400 545,420 552,440 510,450 485,465 478,490 482,515 450,508 418,518 422,495 415,470 400,450 400,410" />
      <circle cx="210" cy="470" r="18" fill="none" stroke="#444" strokeWidth="3" />
    </Traced>

    {/* nave and aisles */}
    <Bay f={C.pink} p="685,225 707,217 887,214 896,220 895,260 728,264 690,264 685,256" />
    <Bay f={C.rose} p="672,275 690,264 894,258 896,303 693,308 672,296" />
    <Bay f={C.mauve} p="674,328 693,307 896,302 940,300 941,382 693,388 674,378" />
    <Bay f={C.rose} p="675,398 693,388 898,382 898,428 694,431 675,426" />
    <Bay f={C.pink} p="686,440 694,431 898,427 898,466 888,472 696,474 686,466" />
    <g stroke="#a8636a" strokeWidth="1" fill={C.pink}>
      <path d="M708 218 887 215M686 224 890 221M700 472 886 469M704 475 886 472" fill="none" />
      {topPegs.map((x, i) => (
        <g key={x}>
          <path d={`M${x - 8} ${219 - i} V${199 - i} h16 V${219 - i}`} />
          <path d={`M${x - 6} ${202 - i} h12 v20 l-6 6 l-6 -6z`} stroke="#5c2026" />
        </g>
      ))}
      {footPegs.map((x, i) => (
        <g key={x}>
          <path d={`M${x - 8} ${473 - i} V${495 - i} h16 V${473 - i}`} />
          <path d={`M${x - 7} ${470 - i} l7 -7 l7 7 l-2 2 v19 h-10 v-19z`} stroke="#5c2026" />
        </g>
      ))}
      <path d="M702 471h22M742 470h24M784 470h22M826 469h20M868 467h20" strokeWidth="2" strokeDasharray="3 5 6 3" stroke="#3a1016" fill="none" />
    </g>

    {/* transept */}
    <Bay f={C.sky} p="892,142 898,139 936,139 941,302 896,302" />
    <Bay f={C.blue} p="936,139 1019,139 1021,301 940,302" />
    <Bay f={C.sky} p="1018,139 1054,138 1058,142 1062,300 1021,300" />
    <Bay f={C.crossing} p="940,301 1021,300 1022,379 942,382" />
    <Bay f={C.sky} p="898,382 942,381 944,552 900,548 893,540 893,475 898,470" />
    <Bay f={C.blue} p="942,381 1022,379 1024,549 944,550" />
    <Bay f={C.sky} p="1022,379 1064,380 1067,540 1048,550 1024,548" />
    <Traced x={820} y={100}>
      <g fill={C.sky} stroke="#35506b" strokeWidth="3">
        <path d="M148 223h55l18 14-18 19h-55zM783 207l-68 4-10 18 12 18 66-2z" />
        <path d="M178 345 205 320V300h14l8 55z" stroke="none" />
        <path d="M218 115V235M222 255 226 345M210 260v40l-5 20M714 118V210M716 245V340" fill="none" />
      </g>
      <Pier f={C.sky} s="#35506b" w={2} p="143,90 180,88 178,55 195,50 210,55 228,48 243,65 240,80 262,98 262,122 225,122 200,140 170,135 165,122 143,122" />
      <Pier f={C.blue} s="#1c2b50" w={3} p="320,45 345,50 380,45 388,60 400,65 405,85 427,100 425,118 362,118 345,135 330,120 298,120 300,95 318,85 315,62" />
      <Pier f={C.blue} s="#1c2b50" w={3} p="535,45 550,52 570,48 600,45 605,75 632,95 632,118 595,118 585,132 570,118 505,118 505,95 530,75" />
      <Pier f={C.sky} s="#35506b" w={2} p="695,40 720,45 745,38 755,60 782,70 780,100 765,120 710,128 690,112 668,110 668,90 690,70" />
      <circle cx="185" cy="130" r="14" fill="none" stroke="#35506b" strokeWidth="3" />
    </Traced>
    <Traced x={820} y={370}>
      <g fill={C.sky} stroke="#35506b" strokeWidth="3">
        <path d="M163 390h70l20 20-20 22h-70zM803 385h-68l-20 16 20 17h68z" />
        <path d="M220 325v180M238 290v100M232 440v75M750 290v90M748 425v45M744 485v20M165 435l3 95" fill="none" />
        <path d="M803 385v34" stroke="#111" strokeWidth="6" />
      </g>
      <Pier f={C.sky} s="#24415f" w={3} p="172,540 205,535 212,510 240,515 252,528 292,530 290,555 278,565 270,590 262,598 262,625 230,625 228,600 212,575 172,570" />
      <Pier f={C.blue} s="#1c2b50" w={3} p="325,530 350,528 370,515 390,528 455,528 445,550 425,570 418,590 392,605 390,618 355,615 350,590 335,570" />
      <Pier f={C.blue} s="#1c2b50" w={3} p="527,530 590,525 610,510 630,524 660,525 650,555 636,570 632,612 600,615 590,600 565,585 550,560" />
      <Pier f={C.sky} s="#24415f" w={3} p="690,525 735,510 760,505 800,525 805,555 780,560 765,580 755,590 755,615 728,615 725,590 700,570" />
      <circle cx="224" cy="532" r="14" fill="none" stroke="#35506b" strokeWidth="3" />
      <circle cx="758" cy="523" r="14" fill="none" stroke="#35506b" strokeWidth="3" />
      <path d="M803 528v32h16" fill="none" stroke="#111" strokeWidth="6" />
    </Traced>

    {/* choir, ambulatory and chapels */}
    <g fill={C.yellow} stroke="#6d692f" strokeWidth="1">
      {spurs.map(([x, y]) => {
        const a = (Math.atan2(y - 338, x - 1235) * 180) / Math.PI;
        return (
          <g key={`${x}-${y}`} transform={`translate(${x} ${y}) rotate(${a})`}>
            <rect x="-12" y="-4" width="17" height="8" />
            <path d="M5 -5v10" stroke="#4a4722" />
          </g>
        );
      })}
    </g>
    <polygon
      points="1203,218 1222,222 1240,221 1240,234 1270,238 1272,250 1288,262 1308,270 1306,285 1314,300 1311,314 1324,322 1325,348 1311,358 1312,370 1314,390 1300,403 1288,405 1277,428 1262,441 1240,443 1222,455 1196,458"
      fill={C.yellow}
      stroke="#8a8548"
      strokeWidth="1"
    />
    <Bay f={C.yellow} p="1060,190 1065,192 1066,205 1073,211 1087,210 1088,193 1118,194 1118,213 1158,213 1158,196 1176,196 1176,210 1188,210 1188,196 1202,196 1203,215 1225,224 1225,440 1202,458 1202,467 1068,466 1065,423 1061,258" />
    {chapels.map(([x, y, r]) => (
      <g key={`${x}`}>
        <circle cx={x} cy={y} r={r} fill={C.yellow} stroke="#6d692f" strokeWidth="1" />
        <circle cx={x} cy={y} r={r} fill="none" stroke="#2b2c0c" strokeWidth="2" strokeDasharray="2 7 4 6" />
      </g>
    ))}
    <Bay f={C.yellow} p="1182,240 1222,246 1227,254 1182,256" />
    <Bay f={C.yellow} p="1185,420 1231,420 1226,436 1190,438" />
    <Bay f={C.khaki} p="1061,257 1182,254 1227,253 1244,300 1215,299 1062,300" />
    <Bay f={C.beige} p="1227,253 1266,275 1289,313 1290,357 1269,397 1231,420 1185,422 1065,423 1064,379 1184,378 1217,374 1243,345 1243,325 1215,299 1240,288" />
    <Bay f={C.khaki} p="1227,253 1266,275 1234,306 1215,299" />
    <Bay f={C.lime} p="1021,300 1215,299 1233,308 1243,325 1243,346 1234,364 1216,374 1182,379 1022,380" />
    <g fill={C.yellow} stroke="#3d3a14" strokeWidth="1">
      <path d="M1062 216 1097 215l4 4 4-4h32l4 4 4-4h28l8 5v30" fill="none" strokeWidth="2" />
      <path d="M1066 462h31M1110 462h29M1152 462h29M1184 424v20q2 14 18 18M1066 466h32M1110 466h30M1152 466h30" fill="none" />
      <path d="M1098 463l6-6 6 6v22h-12zM1139 463l6-6 6 6v22h-12zM1181 466v19h12v-19" />
      <path d="M1070 463h26M1112 463h26M1154 463h26" fill="none" strokeWidth="3" strokeDasharray="2 7" />
    </g>

    {/* sacristy and treasury */}
    <Traced x={1050} y={60}>
      <path d="M92 48 205 50 320 38 413 30V90H515L522 120C548 118 560 134 560 152S545 186 522 184V440L498 462 485 410 452 402H130L112 380V195L95 190Z" fill={C.brown} stroke="#b59a8a" strokeWidth="2" />
      <g fill="none" stroke="#6f5248" strokeWidth="3">
        <path d="M92 48 205 50 320 38 413 30M92 48 95 168H125M112 195V375M125 222V385L133 402M208 50V105M112 195V202H130L140 216H210L217 222 225 216H295L306 225V400M310 40V200M318 40V200M322 135H375M322 140H375M410 125V205M422 128V202M130 203H210V190H222V203H310M322 202H365V180H345V205M325 218H350L368 210M322 222V385M308 222V370M308 395H322" />
        <path d="M292 88H310V70H320V88H345V98H320V115H308V98H292ZM398 90H410V70H422V90H435V97H398ZM487 88H508V70H520V88H538V98H520V115H508V98H487ZM475 208H508V178H520V205H538V215H520L512 235 504 215H478ZM497 305L508 290H518V305H538V315H518V330L508 328ZM322 305H350V312H322ZM522 400H538V412H522ZM390 208H438V215L420 222 410 215H390Z" fill={C.brown} />
        <path d="M355 93H400" strokeDasharray="5 14" strokeWidth="7" />
        <path d="M490 455 505 462 500 490 480 484Z" fill={C.yellow} />
      </g>
      <path d="M70 400H112V452H70L42 430V400ZM185 405H240L243 418V430H300Q318 440 316 462H205V430H185ZM325 405H375V452H325ZM415 402H450L488 412V465H445V445H415Z" fill="#fff" stroke="#6b6742" strokeWidth="2" />
      <path d="M130 402H180M210 402H240M270 402H322M350 402H460" stroke="#3a2a20" strokeWidth="3" />
      <circle cx="422" cy="468" r="15" fill={C.yellow} stroke="#6b6742" strokeWidth="2" />
    </Traced>

    {/* bay lines */}
    <g fill="none" stroke="#4c3f3f" strokeOpacity=".5" strokeWidth="1">
      <path d="M726 228l1 34 1 45 2 80 1 44 1 32M768 227l1 34 1 45 2 80 1 43 1 33M809 226l2 34 1 44 2 81v44l2 32M851 225l1 34 1 44 3 81v44l2 32M894 220v38l1 44 2 81 1 44v40" />
      <path d="M686 263l41-1 125-3 42-1M692 308l36-1 125-4 42-1M693 388l37-1 126-3 41-1M694 431l37 0 125-3 42-1" />
      <path d="M627 234l1 32 1 38M630 325l1 50M631 398v35l1 40M596 267h32l40-1M598 309h76M596 389h80M598 433h76" />
      <path d="M936 139v40l1 39 1 39 1 44M1018 140v37l-1 40 1 39 2 44M941 382l1 44v39l1 41v36M1022 381v43l1 39v41l1 40M1060 216v40l2 43M1064 380l1 43v40M892 179h44l82-2h38M896 219h41l80-2h41M894 258l44-1 80-1h42M896 302h44M1020 300h42M898 383l44-1M942 426l80-2h43M898 427h44M900 466l42-1 81-2h42M900 507l43-1 80-2h40" />
      <path d="M1060 256l41-2h40l40-1 46 0M1064 423h120l47-3M1101 216v38l1 44 2 81v44 40M1141 216v38l1 44 2 80 1 45v40M1181 222v31l1 44 2 81v44M1227 253l-12 46M1266 275l-33 33M1244 346l46 11M1234 364l35 33M1217 375l14 45M1290 313v44" />
      <path d="M892 140h44M898 139h30M962 139h26M1034 139h20" stroke="#1c2b50" />
    </g>

    {/* piers with their side letters */}
    {piers.map(([x, y, k]) => (
      <path key={`${x}-${y}`} d={`M${x} ${y - 5}l2 3 3 2-3 2-2 3-2-3-3-2 3-2z`} fill={pierFill[k]} stroke={pierInk[k]} strokeWidth="2" />
    ))}
    {[[895, 179], [896, 219], [900, 466], [901, 507]].map(([x, y]) => (
      <path key={`${x}-${y}`} d={`M${x - 3} ${y - 5}l5 5-5 5`} fill="none" stroke="#16304d" strokeWidth="2" />
    ))}
    {[[1056, 177], [1058, 217], [1064, 462], [1063, 504]].map(([x, y]) => (
      <path key={`${x}-${y}`} d={`M${x + 3} ${y - 5}l-5 5 5 5`} fill="none" stroke="#16304d" strokeWidth="2" />
    ))}
    {apse.map(([x, y]) => (
      <path key={`${x}-${y}`} d={`M${x - 4} ${y - 3}l4-1 4 1-1 4-3 3-3-3z`} fill={C.beige} stroke="#2b2c0c" strokeWidth="2" />
    ))}
    <g fontSize="7" fill="#4d4d4d" textAnchor="middle">
      {piers.map(([x, y]) => (
        <React.Fragment key={`${x}-${y}`}>
          <text x={x - 10} y={y + 2}>b</text>
          <text x={x + 11} y={y + 2}>d</text>
          <text x={x - 1} y={y - 9}>{y < 340 ? "c" : "a"}</text>
          <text x={x} y={y + 13}>{y < 340 ? "a" : "c"}</text>
        </React.Fragment>
      ))}
      {topPegs.map((x, i) => (
        <React.Fragment key={x}>
          <text x={x} y={197 - i}>c</text>
          <text x={x - 11} y={208 - i}>b</text>
          <text x={x + 11} y={208 - i}>d</text>
          <text x={x} y={roseTops[i] - 26}>a</text>
        </React.Fragment>
      ))}
      {footPegs.map((x, i) => (
        <React.Fragment key={x}>
          <text x={x} y={501 - i}>c</text>
          <text x={x - 11} y={486 - i}>b</text>
          <text x={x + 11} y={486 - i}>d</text>
          <text x={x} y={462 - i}>a</text>
        </React.Fragment>
      ))}
      {[1104, 1145, 1186].map((x) => (
        <React.Fragment key={x}>
          <text x={x} y={484}>c</text>
          <text x={x - 9} y={474}>b</text>
          <text x={x + 11} y={474}>d</text>
        </React.Fragment>
      ))}
      {loose.map(([t, x, y], i) => (
        <text key={i} x={x} y={y + 2}>{t}</text>
      ))}
    </g>
    <g fontSize="5" fill="#4a5a52" textAnchor="middle">
      {marks.map(([t, x, y], i) => (
        <text key={i} x={x} y={y + 2}>{t}</text>
      ))}
    </g>
    <g stroke="#555" strokeWidth="1" strokeDasharray="2 1">
      <path d="M907 123h10M971 122h12M1033 121h10M919 567h10M979 564h12M1043 564h10M698 493h9" />
    </g>
    <circle cx="1300" cy="240" r="1" fill="#444" />

    <g fontSize="8" fill="#4a4a4a" textAnchor="middle">
      {rooms.map(([t, x, y]) => (
        <text key={t} x={x} y={y + 3}>{t}</text>
      ))}
    </g>
    <g fontSize="15" fill="#2a5590" textAnchor="middle">
      {circles.map(([t, x, y]) => (
        <g key={t}>
          <circle cx={x} cy={y} r="10" fill="#f3fbff" stroke="#9dbfd8" strokeWidth="1" />
          <text x={x} y={y + 5}>{t}</text>
        </g>
      ))}
    </g>
    <g fill="#2f5f9a" textAnchor="middle">
      {tags.map(([t, x, y]) => {
        const big = t.startsWith("F");
        const faded = t === "F_14.1";
        return (
          <g key={t}>
            <rect x={x - (big ? 13 : 11)} y={y - 4} width={big ? 27 : 23} height="8" fill={faded ? "none" : "#f3fbff"} fillOpacity=".6" stroke={faded ? "#b98ab5" : "#8fb7da"} strokeWidth="1" />
            <text x={x} y={y + 3} fontSize={big ? 8 : 6} fill={faded ? "#7b5a8c" : undefined}>{t}</text>
          </g>
        );
      })}
    </g>
  </svg>
);

/* ---------- page ---------- */

export default function App() {
  return (
    <Shell>
      <GlobalStyle />
      <Panel aria-label="Strukturhierarchie">
        <Header>
          <Tab $active>
            <Brick />
            Strukturhierarchie
          </Tab>
          <HeaderTools>
            <Tool aria-label="Maximieren">
              <Maximize />
            </Tool>
          </HeaderTools>
        </Header>
        <ToolRow>
          <Tools items={treeTools} tall />
        </ToolRow>
        <TreeArea>
          <Tree>
            {rows.map((r, i) => (
              <Row key={i} $depth={r.d}>
                {r.open === undefined ? (
                  <Twisty as="span" />
                ) : (
                  <Twisty aria-label={r.t} aria-expanded={r.open}>
                    <Chevron open={r.open} />
                  </Twisty>
                )}
                <CheckWrap>
                  <Check type="checkbox" id={`node-${i}`} defaultChecked={r.sel} />
                  {r.sel && (
                    <svg width="11" height="11" viewBox="0 0 11 11" fill="none" aria-hidden="true">
                      <path d="m2 5.500 2.500 2.500L9 3" stroke="#333" strokeWidth="1.300" />
                    </svg>
                  )}
                </CheckWrap>
                <RowLabel htmlFor={`node-${i}`} $selected={r.sel}>
                  {r.k === "brick" ? <Brick /> : r.k === "shape" ? <Shape /> : <Glasses />}
                  {r.t}
                </RowLabel>
              </Row>
            ))}
          </Tree>
          <Scrollbar>
            <ScrollButton aria-label="Nach oben blättern">
              <Svg size={10}>
                <path d="m2 11 6-6 6 6" stroke="#8a8a8a" strokeWidth="2" />
              </Svg>
            </ScrollButton>
            <Track>
              <Thumb />
            </Track>
            <ScrollButton aria-label="Nach unten blättern">
              <Svg size={10}>
                <path d="m2 5 6 6 6-6" stroke="#b0b0b0" strokeWidth="2" />
              </Svg>
            </ScrollButton>
          </Scrollbar>
        </TreeArea>
        <ToolRow>
          <Tools items={treeFooter} />
        </ToolRow>
      </Panel>
      <Panel $grow aria-label="2D-Visualisierung">
        <Header>
          <Tab>
            <Glasses />
            2D-Visualisierung
          </Tab>
          <HeaderTools>
            <Tools items={viewTools} tall />
          </HeaderTools>
        </Header>
        <Canvas>
          <FloorPlan />
        </Canvas>
        <ToolRow>
          <Tools items={viewFooter} />
        </ToolRow>
      </Panel>
    </Shell>
  );
}
